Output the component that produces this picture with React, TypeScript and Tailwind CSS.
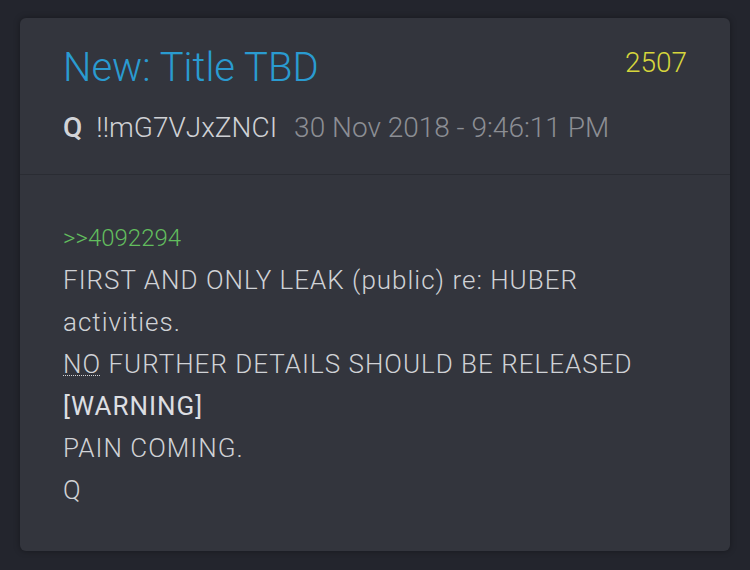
export default function App() {
  const font = { fontFamily: "Roboto, 'Liberation Sans', sans-serif" };
  return (
    <div className="min-h-[570px] w-[750px] bg-[#23252d] pt-[18px] pb-5 px-5" style={font}>
      <div className="rounded-md bg-[#33353d] shadow-[0_0_6px_rgba(0,0,0,0.35)]">
        <div className="border-b border-[#2a2c33] px-[43px] pt-[26px] pb-[28px]">
          <div className="flex items-start justify-between">
            <h1 className="text-[40px] leading-[48px] font-light text-[#2a9bd0]">New: Title TBD</h1>
            <span className="mt-[3px] text-[28px] leading-[32px] font-light text-[#d6d63c]">2507</span>
          </div>
          <div className="mt-[18px] flex items-baseline text-[28px] leading-[36px]">
            <span className="font-medium text-[#d2d4d8]">Q</span>
            <span className="ml-[14px] font-light text-[#cfd1d5]">!!mG7VJxZNCI</span>
            <span className="ml-[17px] font-light text-[#8c8e94]">30 Nov 2018 - 9:46:11 PM</span>
          </div>
        </div>
        <div className="px-[43px] pt-[42px] pb-[40px] text-[26px] leading-[42px] font-light tracking-[1px] text-[#d0d2d6]">
          <p className="text-[24px] tracking-normal text-[#62bd5e]">&gt;&gt;4092294</p>
          <p>FIRST AND ONLY LEAK (public) re: HUBER activities.</p>
          <p>
            <abbr className="underline decoration-dotted decoration-1 underline-offset-[2px]" title="No">NO</abbr> FURTHER DETAILS SHOULD BE RELEASED
          </p>
          <p className="font-normal text-[#dcdee2]">[WARNING]</p>
          <p>PAIN COMING.</p>
          <p>Q</p>
        </div>
      </div>
    </div>
  );
}
